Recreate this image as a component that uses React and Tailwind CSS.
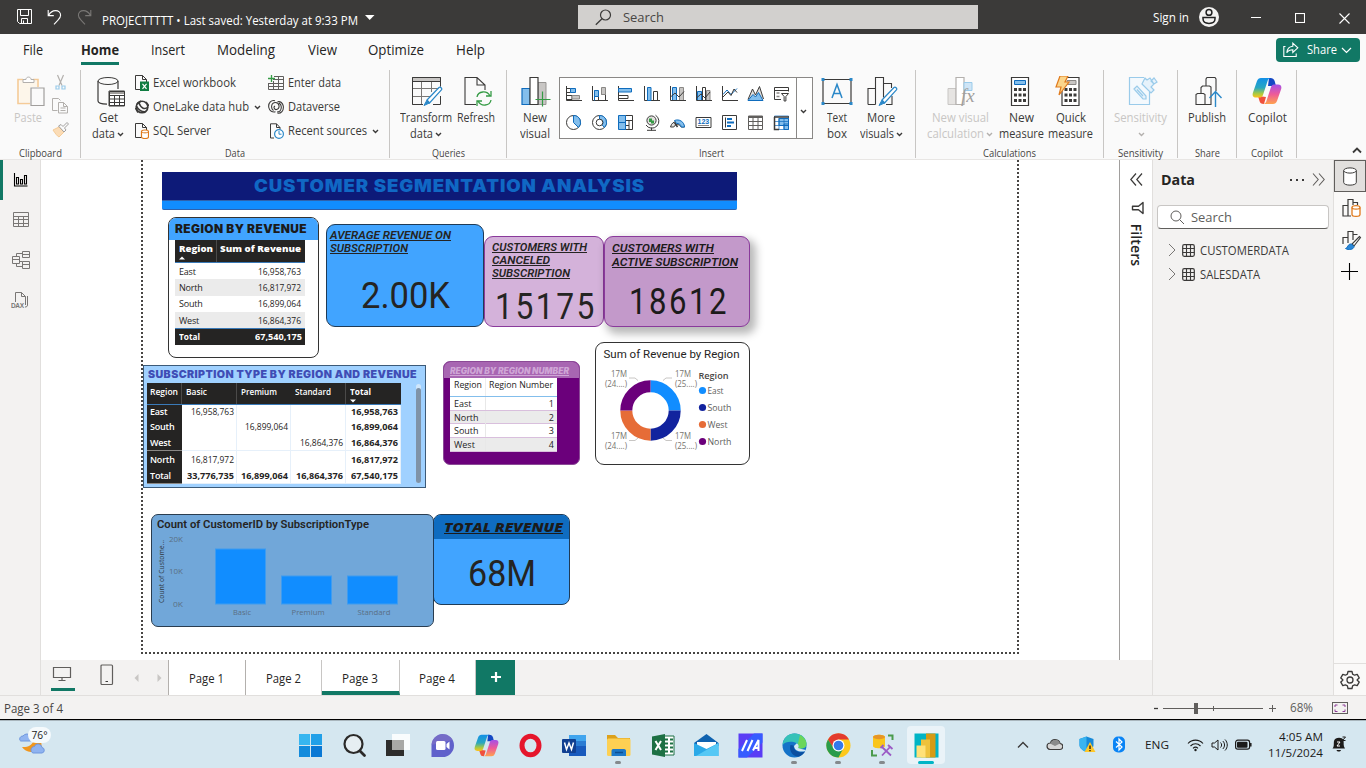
import React, { useLayoutEffect, useRef } from "react";

/* Condenses or widens a label so that it fills the width of its slot. */
function Fit({ className = "", children }) {
  const box = useRef(null);
  const text = useRef(null);
  useLayoutEffect(() => {
    const el = text.current;
    el.style.transform = "none";
    const natural = el.getBoundingClientRect().width;
    const room = box.current.offsetWidth;
    if (natural > 0) el.style.transform = `scaleX(${room / natural})`;
  });
  return (
    <span ref={box} className={"block shrink-0 whitespace-nowrap " + className}>
      <span ref={text} className="inline-block origin-left">{children}</span>
    </span>
  );
}

function Icon({ w = 16, h = 16, className = "", children }) {
  return (
    <svg width={w} height={h} viewBox={`0 0 ${w} ${h}`} fill="none" stroke="#3b3a39" className={"block shrink-0 " + className}>
      {children}
    </svg>
  );
}

const Chevron = ({ className = "", color = "#3b3a39" }) => (
  <Icon w={7} h={5} className={className}><path d="M1 1l2.5 2.5L6 1" stroke={color} strokeWidth="1.4" /></Icon>
);

/* ---------- title bar ---------- */
function TitleBar() {
  return (
    <header className="flex h-[34px] items-center bg-[#3b3a39] text-white">
      <div className="flex w-[578px] items-center pl-[17px]">
        <Icon w={15} h={16}><path d="M.5.5h14v14H2.500L.5 12.500zM3.500.5v6h8v-6M4.500 14.500v-5h6v5M6.500 11.500v3" stroke="#fff" /></Icon>
        <Icon w={15} h={16} className="ml-[15px]"><path d="M1.200 1v5.600h5.600M1.500 6.400C3.400 3 6 1.600 8.600 1.600c3 0 5 2 5 4.600 0 2.200-1 3.200-2.600 4.900L7 15.300" stroke="#fff" strokeWidth="1.100" /></Icon>
        <Icon w={15} h={16} className="ml-[15px]"><path d="M13.800 1v5.600H8.200M13.500 6.400C11.600 3 9 1.600 6.400 1.600c-3 0-5 2-5 4.600 0 2.200 1 3.200 2.600 4.900l4 4.200" stroke="#797775" strokeWidth="1.100" /></Icon>
        <Fit className="mt-[7px] ml-[10px] w-[256px] text-[12px] leading-[16px]">PROJECTTTTT • Last saved: Yesterday at 9:33 PM</Fit>
        <Icon w={10} h={6} className="mt-[2px] ml-[7px]"><path d="M0 0h9.500L4.700 5z" fill="#fff" stroke="none" /></Icon>
      </div>
      <div className="flex h-[24px] w-[400px] items-center bg-[#d2d0ce] pl-[17px] text-[#484644]">
        <Icon w={17} h={17}><circle cx="10.500" cy="6" r="5" strokeWidth="1.200" /><path d="M7 9.700L.8 15.800" strokeWidth="1.300" /></Icon>
        <Fit className="ml-[11px] w-[41px] text-[13px] leading-[18px]">Search</Fit>
      </div>
      <div className="flex flex-1 items-center pl-[175px]">
        <Fit className="mt-px w-[36px] text-[12px] leading-[16px]">Sign in</Fit>
        <Icon w={20} h={20} className="ml-[10px]"><circle cx="10" cy="10" r="10" fill="#f3f2f1" stroke="none" /><circle cx="10" cy="5.400" r="2.900" stroke="#222" strokeWidth="1.500" /><path d="M4 10.600h12v1.200c0 3-2.700 4.600-6 4.600s-6-1.600-6-4.600z" stroke="#222" strokeWidth="1.500" /></Icon>
        <Icon w={10} h={10} className="ml-[32px]"><path d="M0 5.500h10" stroke="#fff" /></Icon>
        <Icon w={10} h={10} className="mt-[2px] ml-[34px]"><rect x=".5" y=".5" width="9" height="9" stroke="#fff" strokeWidth="1.100" /></Icon>
        <Icon w={11} h={11} className="mt-[2px] ml-[34px]"><path d="M.5.5l10 10M10.500.5l-10 10" stroke="#fff" strokeWidth="1.100" /></Icon>
      </div>
    </header>
  );
}

/* ---------- ribbon ---------- */
function RibbonTabs() {
  return (
    <nav className="flex h-[34px] items-start bg-[#fafafa] pl-[23px] text-[14px] leading-[32px] text-[#252423]">
      <Fit className="w-[20px]">File</Fit>
      <div className="ml-[38px] h-[31px] w-[38px] border-b-[3px] border-[#117865]">
        <Fit className="w-[38px] font-bold">Home</Fit>
      </div>
      <Fit className="ml-[32px] w-[34px]">Insert</Fit>
      <Fit className="ml-[32px] w-[58px]">Modeling</Fit>
      <Fit className="ml-[33px] w-[29px]">View</Fit>
      <Fit className="ml-[31px] w-[56px]">Optimize</Fit>
      <Fit className="ml-[32px] w-[29px]">Help</Fit>
      <div className="mt-[4px] mr-[6px] ml-auto flex h-[24px] w-[84px] items-center rounded-[4px] bg-[#117865] pl-[7px] text-white">
        <Icon w={16} h={16}><path d="M2.500 4.500H.8v10h12.400v-3M9.800 1.200l5 4.600-5 4.600V7.800c-3 0-4.600.8-6 3 .3-4 2.400-6.200 6-6.600z" stroke="#fff" strokeWidth="1.100" /></Icon>
        <Fit className="ml-[8px] w-[30px] text-[12px] leading-[24px]">Share</Fit>
        <Icon w={11} h={7} className="ml-[4px]"><path d="M1 1l4.500 4.500L10 1" stroke="#fff" strokeWidth="1.200" /></Icon>
      </div>
    </nav>
  );
}

function Group({ className, label, labelClass, children }) {
  return (
    <section className={"mt-[2px] flex h-[88px] shrink-0 flex-col border-r border-[#c8c6c4] " + className}>
      <div className="flex h-[76px] shrink-0 items-start">{children}</div>
      <div className="flex h-[12px] shrink-0 justify-center text-[10.500px] leading-[15px] text-[#484644]"><Fit className={labelClass}>{label}</Fit></div>
    </section>
  );
}

function Big({ className = "", icon, one, oneClass, two, twoClass, arrow, dim }) {
  return (
    <div className={"flex shrink-0 flex-col items-center text-[12px] leading-[16px] " + (dim ? "text-[#c8c6c4] " : "text-[#3b3a39] ") + className}>
      <div className="mt-[6px] flex h-[34px] items-start">{icon}</div>
      <Fit className={oneClass}>{one}</Fit>
      <div className="flex h-[16px] items-center">
        {two && <Fit className={twoClass}>{two}</Fit>}
        {arrow && <Chevron className="mt-px ml-[2px]" color={dim ? "#b3b0ad" : "#3b3a39"} />}
      </div>
    </div>
  );
}

function Small({ icon, text, w, arrow }) {
  return (
    <div className="flex h-[24px] items-center text-[12px] leading-[18px] text-[#3b3a39]">
      {icon}<Fit className={"ml-[4px] " + w}>{text}</Fit>{arrow && <Chevron className="mt-px ml-[5px]" />}
    </div>
  );
}

const B = "#0f6cbd";
const L = "#83beec";
const G = "#8a8886";

const gallery = [
  <><path d="M1.500 1v14.500H17M1.500 10.500H7v4H1.500M1.500 3.500h4v4h-4" /><path d="M5.500 3.500h5v4h-5z" fill={L} stroke={B} /><path d="M7 10.500h7.500v3.500H7z" fill="#c8c6c4" stroke={G} /></>,
  <><path d="M1.500 1v14.500H17M3.500 11.500h4v4M10.500 9.500h4v6" /><path d="M3.500 5.500h4v6h-4zM3.500 5.500v10" fill={L} stroke={B} /><path d="M10.500 2.500h4v7h-4z" fill="#c8c6c4" stroke={G} /></>,
  <><path d="M1.500 1v14.500H17M1.500 10.500h9.500v3H1.500" /><path d="M1.500 3.500h13v3.500h-13z" fill={L} stroke={B} /></>,
  <><path d="M1.500 1v14.500H17M10.500 15.500v-9h4v9" /><path d="M4.500 2.500h3.500v13H4.500z" fill={L} stroke={B} /></>,
  <><path d="M3.500 2.500h4v13h-4z" fill={L} stroke={B} /><path d="M10.500 2.500h4v13h-4z" fill="#c8c6c4" stroke={G} /><path d="M1.500 1v14.500H17M1.500 12L6 8l4 4 5-5.500" /></>,
  <><path d="M2.500 6.500h4v9h-4z" fill={L} stroke={B} /><path d="M7.500 2.500h3v13h-3z" fill="#fff" /><path d="M11.500 5.500h3.500v10h-3.500z" fill="#c8c6c4" stroke={G} /><path d="M1.500 1v14.500H17M1.500 13L6 9l4 4 5-6" /></>,
  <><path d="M2 9.500l4-4.500 4 4.500 6-6" stroke={B} /><path d="M1.500 1v14.500H17M2 12l5-5 3 3.500L13 4l3 3.500" /></>,
  <><path d="M1 14.500L5.500 4l3 6L12.500 1.500 16.500 14" fill="#e1dfdd" /><path d="M1 15.500l5-6 2.500 2.500 3-4.500 4.500 8z" fill={L} stroke={B} /></>,
  <><path d="M8 14.500H1.500v-12h14v4M1.500 5.500h14" /><path d="M3.500 8h3M3.500 11.500h3" stroke={G} strokeWidth="1.400" /><path d="M8.500 8.500h7l-2.600 3V16h-1.800v-4.500z" fill="#fff" /></>,
  <><circle cx="8.500" cy="8.500" r="7" /><path d="M8.500 8.500v-7a7 7 0 0 1 5 12z" fill={L} stroke={B} /></>,
  <><circle cx="8.500" cy="8.500" r="7" fill="#fff" /><path d="M8.500 1.500a7 7 0 0 1 5 12l-2.500-2.700a3.100 3.100 0 0 0-2.500-5.400z" fill={L} stroke={B} /><circle cx="8.500" cy="8.500" r="3.300" fill="#fff" /></>,
  <><path d="M8.500 1.500h7v14h-7zM8.500 6.500h7M12 6.500v9M8.500 11.500H12" /><path d="M1.500 1.500h7v7h-7zM1.500 8.500h7v7h-7z" fill={L} stroke={B} /></>,
  <><circle cx="8.500" cy="6.500" r="4.600" fill="#e1dfdd" /><path d="M12.500 1.200A7 7 0 1 1 3 11M8.500 13.500v3M4 16.300h9" /><path d="M6 4.500h3v2h2v3H8V8H6z" fill="#359b45" stroke="none" /></>,
  <><path d="M1.500 13a7.200 7.200 0 0 1 14 0h-3.300a4 4 0 0 0-7.400 0z" fill="#e1dfdd" /><path d="M15.500 13a7.200 7.200 0 0 0-10-6.500L7.500 9.500a4 4 0 0 1 4.700 3.500z" fill={L} stroke={B} /><path d="M8.500 13L5.500 8.500" strokeWidth="1.500" /></>,
  <><path d="M1 3.500h15v10H1z" /><path d="M3 11.500h11" stroke={G} /><text x="2.500" y="10" fontSize="7" fontFamily="Liberation Sans" fontWeight="bold" fill={B} stroke="none">123</text></>,
  <><path d="M1.500 1.500h14v14h-14zM4.500 3.500v10" /><path d="M6 5h5M6 8.500h7M6 12h4" stroke={B} strokeWidth="1.800" /></>,
  <><path d="M1.500 2h14v13.500h-14zM1.500 7.500h14M1.500 11.500h14M6 4v11.500M11 4v11.500" stroke="#605e5c" /><path d="M1 3h15" strokeWidth="2" stroke="#605e5c" /></>,
  <><path d="M6 4.500h9.500v7H6zM11 10h4.500v5.500H11z" fill={L} stroke={B} /><path d="M1.500 2h14v13.500h-14zM1.500 7.500h14M1.500 11.500h14M6 4v11.500M11 4v11.500" stroke={B} strokeWidth=".7" /><path d="M6 15.500H1.500V3M1 3h15" strokeWidth="1.500" /></>,
];

const pencil = <><path d="M16 24L28 11.500c1.200-1.200 3.600 1 2.400 2.400L18.500 27z" fill="#fff" stroke="#2b88c8" strokeWidth="1.200" /><path d="M16 24l2.500 3L13 29.500z" fill="#2b88c8" stroke="#2b88c8" /></>;

function CopilotLogo({ s = 30 }) {
  return (
    <svg width={s} height={s} viewBox="0 0 30 30" className="block">
      <defs>
        <linearGradient id="cpa" x1="0" y1="0" x2="0" y2="1"><stop offset="0" stopColor="#1290e8" /><stop offset=".5" stopColor="#28a7c0" /><stop offset=".8" stopColor="#a9c941" /><stop offset="1" stopColor="#ffc21a" /></linearGradient>
        <linearGradient id="cpb" x1="0" y1="0" x2="0" y2="1"><stop offset="0" stopColor="#a550e8" /><stop offset=".5" stopColor="#ee5a98" /><stop offset="1" stopColor="#ffa34e" /></linearGradient>
      </defs>
      <path d="M17 2c4 0 5 1 5.800 3.500L24 10h-8z" fill="#1448c4" />
      <path d="M6 20l8 1L12 28c-3 0-4-1-4.500-3z" fill="#f0503c" />
      <path d="M9 2h10c-2 0-3 1.500-3.600 3.500L11 19c-.8 2-1.800 2.500-4 2.500H4C1 21.500 0 19.500 1 16.500L5 5c.8-2 2-3 4-3z" fill="url(#cpa)" />
      <path d="M21 28H11c2 0 3-1.500 3.600-3.500L19 11c.8-2 1.800-2.500 4-2.500h3c3 0 4 2 3 5L25 25c-.8 2-2 3-4 3z" fill="url(#cpb)" />
    </svg>
  );
}

const page = <path d="M12 14.500H.5V.5h7l4 4V8M7.500.5v4h4" />;

function Ribbon() {
  return (
    <div className="flex h-[92px] border-b border-[#e8e6e4] bg-[#fafafa]">
      <Group className="w-[81px]" label="Clipboard" labelClass="w-[43px]">
        <Big dim className="w-[56px]" one="Paste" oneClass="w-[28px]" icon={
          <Icon w={28} h={32} className="ml-[5px]"><path d="M13 27.500H1v-24h5M16 3.500h5V11" stroke="#f5cb97" strokeWidth="1.600" /><path d="M2.500 5H20v6h-7v15H2.500z" fill="#fdf6ea" stroke="none" /><path d="M6 6.500V3.500h3C9 .3 14 .3 14 3.500h3v3z" fill="#fff" stroke="#b3b0ad" /><path d="M14 12h13v17.500H14z" fill="#fafafa" stroke="#a19f9d" strokeWidth="1.200" /></Icon>} />
        <div className="mt-[4px] -ml-[4px] flex flex-col gap-[7px]">
          <Icon w={17} h={17}><path d="M5.500 1L10 11.500M11.500 1L7 11.500" stroke="#b3b0ad" strokeWidth="1.200" /><path d="M4 12h3v3H4zM10 12h3v3h-3z" stroke="#9acbea" strokeWidth="1.200" /></Icon>
          <Icon w={17} h={17}><path d="M5.500 12.500H.5V.5h6l2 2M6.500 4.500h5l4 4v6.500h-9zM11.500 4.500v4h4M8.500 10h5M8.500 12.500h5" stroke="#b3b0ad" /></Icon>
          <Icon w={17} h={17}><path d="M1 8l6-3 5 5-5 5c-2-1-4-4-6-7z" fill="#fbdcb6" stroke="#f5cb97" /><path d="M6.500 4L9 2.500l2 2L15 .5 16.500 2l-4 4L14 8l-2 2z" fill="#fafafa" stroke="#a19f9d" /></Icon>
        </div>
      </Group>

      <Group className="w-[309px]" label="Data" labelClass="w-[20px]">
        <Big className="w-[54px]" one="Get" oneClass="w-[19px]" two="data" twoClass="w-[23px]" arrow icon={
          <Icon w={28} h={32} className="ml-[5px]"><ellipse cx="11" cy="5" rx="10" ry="3.500" /><path d="M1 5v20c0 1.500 3 3 9 3.200M21 5v8" strokeWidth="1.200" /><path d="M12 15h15.500v15H12z" fill="#fff" /><path d="M12 16.500h15.500" strokeWidth="3" stroke="#a19f9d" /><path d="M12.500 15.500h15v14h-15zM12 19.500h15.500M12 23h15.500M12 26.500h15.500M17.500 19v11M22.500 19v11" /></Icon>} />
        <div className="mt-px flex w-[133px] flex-col">
          <Small text="Excel workbook" w="w-[83px]" icon={<Icon w={14} h={16}>{page}<rect x="5" y="6.500" width="9" height="9.500" fill="#107c41" stroke="none" /><path d="M7.500 8.800l4 5M11.500 8.800l-4 5" stroke="#fff" strokeWidth="1.200" /></Icon>} />
          <Small arrow text="OneLake data hub" w="w-[96px]" icon={<Icon w={14} h={16}><circle cx="7" cy="8" r="5.800" strokeWidth="1.600" /><path d="M1.500 7c1.500 4 6 6.500 9.500 5.500M4 4c2 5.500 6 7 9 4M2 5L6 2M11 3l3 4M.5 9l2.500 4.500" strokeWidth="1.600" /></Icon>} />
          <Small text="SQL Server" w="w-[58px]" icon={<Icon w={14} h={16}>{page}<path d="M6.500 8.500c0-2 7-2 7 0v5.500c0 2-7 2-7 0z" fill="#fff" stroke="#e07a1c" strokeWidth="1.200" /><path d="M6.500 8.500c0 1.800 7 1.800 7 0" stroke="#e07a1c" /></Icon>} />
        </div>
        <div className="mt-px flex flex-col">
          <Small text="Enter data" w="w-[53px]" icon={<Icon w={16} h={16}><path d="M6 1.500h9.500v13H.5V8M5 4.500h10.500M.5 8.500h15M.5 11.500h15M5.500 6v8.500M10.500 2v12.500" stroke="#605e5c" /><path d="M3.500 0v7M0 3.500h7" stroke="#359b45" strokeWidth="1.300" /></Icon>} />
          <Small arrow={false} text="Dataverse" w="w-[52px]" icon={<Icon w={16} h={16}><path d="M5.500 11.500c-3-2-2.500-8 2-8 4 0 5 6 1 7-2 .5-3.500-2.500-1.500-3.500M11 4c3.500 2 3 9-2 9M7 1.800C3.500.5 0 4 .8 8.500c.6 3.500 3.700 5 6.700 4.300M9.500 14.200c3.500.5 6.400-2.500 5.800-7C14.800 4 12.500 2 9.500 2.800" strokeWidth="1.100" /></Icon>} />
          <Small arrow text="Recent sources" w="w-[79px]" icon={<Icon w={16} h={16}><path d="M6 15H2.500V.8h6L12 4.500V6M8.500.8v3.700H12" /><circle cx="11" cy="11" r="4.400" fill="#fff" stroke="#2b88c8" strokeWidth="1.200" /><path d="M11 8v3.200h2.500" stroke="#2b88c8" /></Icon>} />
        </div>
      </Group>

      <Group className="w-[117px]" label="Queries" labelClass="w-[33px]">
        <Big className="ml-[10px] w-[52px]" one="Transform" oneClass="w-[52px]" two="data" twoClass="w-[23px]" arrow icon={
          <Icon w={32} h={32} className="ml-[2px]"><path d="M1.500 1.500h28v4h-28z" fill="#c8c6c4" /><path d="M12 28.500H1.500v-27h28v9M1.500 12.500h28M1.500 20.500h18M10.500 6v22.500M20.500 6v10" stroke="#797775" /><path d="M12 28.500H1.500v-27h28v9M29.500 20v8.500H22" />{pencil}</Icon>} />
        <Big className="ml-[5px] w-[38px]" one="Refresh" oneClass="w-[38px]" icon={
          <Icon w={28} h={32} className="ml-[3px]"><path d="M12 28.500H1V1.500h12L21 9v5M13 1.500V9h8" strokeWidth="1.100" /><path d="M13 21c1-6 10-7 13-1M27 15v5h-5M27 24c-1 6-10 7-13 1M13 30v-5h5" stroke="#359b45" strokeWidth="1.300" /></Icon>} />
      </Group>

      <Group className="w-[409px]" label="Insert" labelClass="w-[25px]">
        <Big className="ml-[10px] w-[36px]" one="New" oneClass="w-[24px]" two="visual" twoClass="w-[30px]" icon={
          <Icon w={30} h={32} className="ml-px"><path d="M17 6.500h8v22h-8z" fill="#c8c6c4" stroke="#979593" /><path d="M1 12.500h8v16H1z" fill={L} stroke={B} strokeWidth="1.200" /><path d="M9 1.500h8v27H9z" fill="#fff" strokeWidth="1.200" /><path d="M21.500 15.500v15M14.500 23.500h15" stroke="#359b45" strokeWidth="1.200" /></Icon>} />
        <div className="mt-[7px] ml-[6px] flex h-[62px] w-[254px] border border-[#8a8886] bg-white">
          <div className="grid w-[236px] grid-cols-9 grid-rows-2 items-center justify-items-center py-px pr-[2px]">
            {gallery.map((g, i) => <Icon key={i} w={17} h={17}>{g}</Icon>)}
          </div>
          <div className="flex flex-1 items-center justify-center border-l border-[#8a8886]"><Chevron className="mt-[6px] -ml-[2px]" /></div>
        </div>
        <Big className="ml-[7px] w-[34px]" one="Text" oneClass="w-[20px]" two="box" twoClass="w-[20px]" icon={
          <Icon w={32} h={32} className="-ml-px"><path d="M2 3.500h28v24H2z" strokeWidth="1.200" /><path d="M.5 2h3v3h-3zM28.500 2h3v3h-3zM.5 26h3v3h-3zM28.500 26h3v3h-3z" fill="#2b88c8" stroke="none" /><path d="M11 22L16 8.500 21 22M12.600 17.500h6.800" stroke="#2b88c8" strokeWidth="1.500" /></Icon>} />
        <Big className="ml-[5px] w-[44px]" one="More" oneClass="w-[28px]" two="visuals" twoClass="w-[34px]" arrow icon={
          <Icon w={32} h={32} className="ml-[2px]"><path d="M2 28.500v-16h7.500M9.500 28.500v-27h8v20M17.500 7.500h8V12M2 28.500h7.500M26 20v8.500h-6" strokeWidth="1.100" />{pencil}</Icon>} />
      </Group>

      <Group className="w-[188px]" label="Calculations" labelClass="w-[53px]">
        <Big dim className="ml-[11px] w-[66px]" one="New visual" oneClass="w-[57px]" two="calculation" twoClass="w-[57px]" arrow icon={
          <Icon w={30} h={32} className="ml-[4px]"><path d="M1 12.500h8v16H1z" fill="#e6e4e2" stroke="#c8c6c4" /><path d="M9 1.500h8v27H9z" fill="#fff" stroke="#b3b0ad" strokeWidth="1.200" /><path d="M17 6.500h8v8h-8z" fill="#cfe5f6" stroke="#9acbea" /><text x="14" y="26" fontSize="19" fontStyle="italic" fontFamily="Liberation Serif" fill="#a19f9d" stroke="none">fx</text></Icon>} />
        <Big className="ml-[5px] w-[46px]" one="New" oneClass="w-[25px]" two="measure" twoClass="w-[45px]" icon={
          <Icon w={20} h={32} className="-ml-[2px]"><path d="M1.500 1.500h17v28h-17z" fill="#fff" strokeWidth="1.200" /><path d="M4.500 4.500h11v4h-11z" fill={L} stroke={B} /><path d="M4 13.500h12M4 19h12M4 24.500h12" strokeWidth="3" strokeDasharray="3 1.500" /></Icon>} />
        <Big className="ml-[4px] w-[45px]" one="Quick" oneClass="w-[30px]" two="measure" twoClass="w-[45px]" icon={
          <Icon w={26} h={32} className="-ml-[6px]"><path d="M7 1.500h17v28H7z" fill="#fff" strokeWidth="1.200" /><path d="M12 4.500h9v4h-9z" fill="#c8c6c4" stroke={G} /><path d="M9.500 13.500h12M9.500 19h12M9.500 24.500h12" strokeWidth="3" strokeDasharray="3 1.500" /><path d="M5 0h8l-3 6h4L4 19l2-8H1z" fill="#fbd58b" stroke="#e07a1c" strokeWidth="1.200" /></Icon>} />
      </Group>

      <Group className="w-[74px]" label="Sensitivity" labelClass="w-[45px]">
        <Big dim className="ml-[9px] w-[55px]" one="Sensitivity" oneClass="w-[53px]" arrow icon={
          <Icon w={30} h={32} className="ml-[4px]"><path d="M16 1.500H1.500v27h20V16" stroke="#9acbea" strokeWidth="1.200" fill="#f4f9fd" /><path d="M6 13l3-3 9 10v3h-3zM9 13.500l6 6.500M14 8l9 9 3-3-3-3 3-3-3-3 3-3 3 4-3 2-4-6-3 2-2-2z" fill="#e6f2fb" stroke="#9acbea" strokeWidth="1.200" /></Icon>} />
      </Group>

      <Group className="w-[59px]" label="Share" labelClass="w-[25px]">
        <Big className="w-[58px]" one="Publish" oneClass="w-[38px]" icon={
          <Icon w={28} h={32} className="ml-[3px]"><path d="M1 28.500v-10l1.500-1h6l1.500 1v10zM6 17v-5.500L7.500 10h7l1.500 1v17.500h-6M11 10V3l1-1.500h8L21 3v12" strokeWidth="1.100" /><path d="M20.500 31V16M14.500 22l6-6.500 6 6.500" stroke="#2b88c8" strokeWidth="1.400" /></Icon>} />
      </Group>

      <Group className="w-[60px]" label="Copilot" labelClass="w-[32px]">
        <Big className="w-[60px]" one="Copilot" oneClass="w-[39px]" icon={<CopilotLogo />} />
      </Group>
      <Icon w={10} h={7} className="mt-[79px] ml-[55px]"><path d="M1 5.500l4-4 4 4" strokeWidth="1.800" /></Icon>
    </div>
  );
}

/* ---------- report visuals ---------- */
const regions = [["East", "16,958,763"], ["North", "16,817,972"], ["South", "16,899,064"], ["West", "16,864,376"]];

function RegionRevenue() {
  return (
    <div className="absolute top-[57px] left-[127px] h-[141px] w-[151px] overflow-hidden rounded-[8px] border border-[#333] bg-white">
      <div className="h-[22px] bg-[#41a4ff] pl-[6px] font-['Inter'] text-[11.500px] leading-[22px] font-black tracking-[0.4px] text-[#1c1b1a]"><Fit className="w-[132px]">REGION BY REVENUE</Fit></div>
      <div className="ml-[6px] w-[130px] text-[9px]">
        <div className="flex h-[23px] border-b border-[#3a7ab8] bg-[#252423] font-extrabold text-white">
          <div className="w-[42px] border-r border-[#4b4a49] pt-[3px] pl-[4px] leading-[11px]"><Fit className="w-[34px]">Region</Fit><Icon w={6} h={4} className="mt-[2px]"><path d="M0 3.500h6L3 .5z" fill="#fff" stroke="none" /></Icon></div>
          <div className="pt-[3px] pl-[3px] leading-[11px]"><Fit className="w-[81px]">Sum of Revenue</Fit></div>
        </div>
        {regions.map(([a, b], i) => (
          <div key={a} className={"flex h-[16.300px] items-center justify-between pr-[4px] pl-[4px] leading-[13px] text-[#252423] " + (i % 2 ? "bg-[#ebebeb]" : "bg-white")}>
            <span className="tracking-[-0.2px]">{a}</span><Fit className="w-[43px]">{b}</Fit>
          </div>
        ))}
        <div className="flex h-[17px] items-center justify-between border-t border-[#3a7ab8] bg-[#252423] pr-[3px] pl-[4px] leading-[14px] font-bold text-white"><Fit className="w-[21px]">Total</Fit><Fit className="w-[47px]">67,540,175</Fit></div>
      </div>
    </div>
  );
}

const matrix = [
  ["East", "16,958,763", "", "", "16,958,763"],
  ["South", "", "16,899,064", "", "16,899,064"],
  ["West", "", "", "16,864,376", "16,864,376"],
  ["North", "16,817,972", "", "", "16,817,972"],
  ["Total", "33,776,735", "16,899,064", "16,864,376", "67,540,175"],
];

function SubscriptionMatrix() {
  return (
    <div className="absolute top-[205px] left-[102px] h-[123px] w-[283px] border border-[#3c5a78] bg-[#a0d1ff] pl-[3px]">
      <Fit className="ml-px w-[269px] font-['Inter'] text-[10.300px] leading-[17px] font-black tracking-[0.4px] text-[#3f4db5]">SUBSCRIPTION TYPE BY REGION AND REVENUE</Fit>
      <div className="flex">
        <div className="w-[254px] text-[9px] leading-[14px]">
          <div className="grid h-[22px] grid-cols-[35px_55px_54px_55px_55px] border-b border-[#3a7ab8] bg-[#252423] font-semibold text-white">
            <div className="border-r border-[#4b4a49] pt-[2px] pl-[3px]"><Fit className="w-[28px]">Region</Fit></div>
            <div className="border-r border-[#4b4a49] pt-[2px] pl-[4px]"><Fit className="w-[21px]">Basic</Fit></div>
            <div className="pt-[2px] pl-[4px]"><Fit className="w-[36px]">Premium</Fit></div>
            <div className="border-r border-[#4b4a49] pt-[2px] pl-[4px]"><Fit className="w-[36px]">Standard</Fit></div>
            <div className="pt-[2px] pl-[4px] font-bold"><Fit className="w-[21px]">Total</Fit><Icon w={6} h={4}><path d="M0 .5h6l-3 3z" fill="#fff" stroke="none" /></Icon></div>
          </div>
          {matrix.map((r, i) => (
            <div key={r[0]} className={"grid grid-cols-[35px_55px_54px_55px_55px] " + (i === 0 ? "h-[13px]" : "h-[16.400px]")}>
              {r.map((c, j) => (
                <div key={j} className={"flex items-center border-b " + (j === 0 ? "border-[#8a8886] bg-[#252423] pl-[3px] font-semibold text-white " : "justify-end border-r border-[#e6f0fa] bg-white pr-[2px] text-[#252423] ") + (i === 4 || j === 4 ? "font-bold " : "") + (i > 0 ? "pt-[2px]" : "")}>
                  {c && (j === 0 ? <span className="tracking-[-0.2px]">{c}</span> : <Fit className={i === 4 || j === 4 ? "w-[47px]" : "w-[43px]"}>{c}</Fit>)}
                </div>
              ))}
            </div>
          ))}
        </div>
        <div className="mt-px ml-[15px] h-[99px] w-[5px] rounded-full bg-[#cfe6fb] pt-[4px]"><div className="h-[95px] rounded-full bg-[#7f93a8]" /></div>
      </div>
    </div>
  );
}

function RegionNumber() {
  return (
    <div className="absolute top-[201px] left-[402px] h-[104px] w-[137px] overflow-hidden rounded-[7px] border border-[#8b4a96] bg-[#6b007b]">
      <div className="h-[16px] bg-[#a866b2] pl-[6px] font-['Inter'] text-[8.500px] leading-[18px] font-black text-[#cfa5d6] italic"><Fit className="w-[119px] [&>span]:underline">REGION BY REGION NUMBER</Fit></div>
      <div className="ml-[6px] w-[107px] bg-white text-[9px] text-[#252423]">
        <div className="flex h-[19px] border-b border-[#83beec] leading-[14px]">
          <div className="w-[36px] border-r border-[#eee] pl-[4px]"><Fit className="w-[28px]">Region</Fit></div>
          <div className="pl-[3px]"><Fit className="w-[64px]">Region Number</Fit></div>
        </div>
        {regions.map(([a], i) => (
          <div key={a} className={"flex h-[13.700px] items-center border-b border-[#d9bfdd] leading-[13px] " + (i % 2 ? "bg-[#ebebeb]" : "bg-white")}>
            <div className="w-[36px] border-r border-[#e8e8e8] pl-[4px]">{a}</div><div className="flex-1 pr-[3px] text-right">{i + 1}</div>
          </div>
        ))}
      </div>
    </div>
  );
}

function Donut() {
  const arcs = [["#118dff", 0], ["#12239e", 1], ["#e66c37", 2], ["#6b007b", 3]];
  const legend = [["#118dff", "East", 16], ["#12239e", "South", 24], ["#e66c37", "West", 20], ["#6b007b", "North", 24]];
  const calls = [["17M", "(24....)", 33, 36], ["17M", "(25....)", 97, 36], ["17M", "(24....)", 33, 98], ["17M", "(25....)", 97, 98]];
  return (
    <div className="absolute top-[182px] left-[554px] h-[123px] w-[155px] rounded-[9px] border border-[#333] bg-white">
      <svg width="153" height="121" viewBox="1 1 153 121" className="block font-['Open_Sans']">
        <text x="8.500" y="16" fontSize="11" fill="#252423" textLength="136" lengthAdjust="spacingAndGlyphs" className="font-['Roboto']">Sum of Revenue by Region</text>
        {arcs.map(([c, i]) => <path key={c} d="M55.500 44.300a24.200 24.200 0 0 1 24.200 24.200" fill="none" stroke={c} strokeWidth="12" transform={`rotate(${i * 90} 55.500 68.500)`} />)}
        <path d="M34 36h6l3 2.500M77 36h-6l-3 2.500M34 98.500h6l3-2.500M77 98.500h-6l-3-2.500" fill="none" stroke="#c8c6c4" />
        {calls.map(([a, b, x, y], i) => (
          <g key={i} fontSize="8.500" fill="#77756f">
            <text x={i % 2 ? 80 : 16} y={y - 1} textLength="16" lengthAdjust="spacingAndGlyphs">{a}</text>
            <text x={i % 2 ? 80 : 10} y={y + 9} textLength="22" lengthAdjust="spacingAndGlyphs">{b}</text>
          </g>
        ))}
        <text x="103.500" y="37" fontSize="9.500" fontWeight="600" fill="#484644" textLength="30" lengthAdjust="spacingAndGlyphs">Region</text>
        {legend.map(([c, n, w], i) => (
          <g key={n}><circle cx="107.500" cy={48.500 + i * 17} r="3.600" fill={c} /><text x="112.500" y={52 + i * 17} fontSize="9.500" fill="#605e5c" textLength={w} lengthAdjust="spacingAndGlyphs">{n}</text></g>
        ))}
      </svg>
    </div>
  );
}

function SubscriptionBars() {
  const bars = [[65, 35, 55, "Basic", 18], [131, 62, 28, "Premium", 33], [197, 62, 28, "Standard", 33]];
  return (
    <div className="absolute top-[354px] left-[110px] h-[113px] w-[283px] rounded-[7px] border border-[#2a3d50] bg-[#71a7d9]">
      <svg width="281" height="111" viewBox="1 1 281 111" className="block font-['Open_Sans']">
        <text x="6" y="14" fontSize="11" fontWeight="600" fill="#252423" textLength="212" lengthAdjust="spacingAndGlyphs" className="font-['Roboto']">Count of CustomerID by SubscriptionType</text>
        <g fontSize="8" fill="#5a6f84">
          <text x="18" y="28" textLength="14" lengthAdjust="spacingAndGlyphs">20K</text><text x="18" y="60" textLength="14" lengthAdjust="spacingAndGlyphs">10K</text><text x="22" y="93" textLength="10" lengthAdjust="spacingAndGlyphs">0K</text>
          {bars.map(([x, y, h, n, w]) => (
            <g key={n}><rect x={x - 0.5} y={y} width="50" height={h} fill="#118dff" stroke="#3f9cf0" /><text x={x + 26 - w / 2} y="101" textLength={w} lengthAdjust="spacingAndGlyphs">{n}</text></g>
          ))}
        </g>
        <text transform="translate(12.500 89) rotate(-90)" fontSize="7.500" fill="#303840" textLength="63" lengthAdjust="spacingAndGlyphs">Count of Custome...</text>
      </svg>
    </div>
  );
}

function Canvas() {
  return (
    <div className="relative h-[500px] w-[1078px] shrink-0 overflow-hidden bg-white">
      <div className="ml-[100px] h-[494px] w-[878px] border-x-2 border-b-2 border-dotted border-[#484644]" />
      <div className="absolute top-[12px] left-[121px] w-[575px]">
        <div className="flex h-[28px] justify-center bg-[#0d1a78] font-['Inter'] text-[17px] leading-[28px] font-black tracking-[0.8px] text-[#1068c4]"><Fit className="w-[391px]">CUSTOMER SEGMENTATION ANALYSIS</Fit></div>
        <div className="h-[10px] rounded-b-[2px] border-y border-[#2f62ad] bg-[#118dff]" />
      </div>
      <RegionRevenue />
      <div className="absolute top-[64px] left-[285px] h-[103px] w-[158px] rounded-[9px] border border-[#1f3b57] bg-[#41a4ff] pt-[4px] pl-[3px] font-['Roboto'] text-[11.500px] leading-[13px] font-semibold text-[#252423]">
        <Fit className="w-[121px] italic [&>span]:underline">AVERAGE REVENUE ON</Fit>
        <Fit className="w-[78px] italic [&>span]:underline">SUBSCRIPTION</Fit>
        <Fit className="mt-[17px] ml-[31px] w-[89px] text-[37px] leading-[48px] font-normal">2.00K</Fit>
      </div>
      <div className="absolute top-[76px] left-[443px] h-[91px] w-[120px] rounded-[9px] border border-[#8a3a9b] bg-[#d4b2da] pt-[4px] pl-[7px] font-['Roboto'] text-[11px] leading-[13px] font-semibold text-[#252423]">
        <Fit className="w-[95px] italic [&>span]:underline">CUSTOMERS WITH</Fit>
        <Fit className="w-[58px] italic [&>span]:underline">CANCELED</Fit>
        <Fit className="w-[78px] italic [&>span]:underline">SUBSCRIPTION</Fit>
        <Fit className="mt-[3px] ml-[3px] w-[102px] text-[37px] leading-[48px] font-normal tracking-[3px]">15175</Fit>
      </div>
      <div className="absolute top-[76px] left-[563px] h-[91px] w-[146px] rounded-[9px] border border-[#8a3a9b] bg-[#c399ca] pt-[4px] pl-[7px] font-['Roboto'] text-[11.500px] leading-[14px] font-semibold text-[#1c1b1a] shadow-[4px_5px_8px_2px_rgba(0,0,0,0.28)]">
        <Fit className="w-[102px] italic [&>span]:underline">CUSTOMERS WITH</Fit>
        <Fit className="w-[126px] italic [&>span]:underline">ACTIVE SUBSCRIPTION</Fit>
        <Fit className="mt-[9px] ml-[17px] w-[100px] text-[37px] leading-[48px] font-normal tracking-[3px]">18612</Fit>
      </div>
      <SubscriptionMatrix />
      <RegionNumber />
      <Donut />
      <SubscriptionBars />
      <div className="absolute top-[354px] left-[392px] h-[91px] w-[137px] overflow-hidden rounded-[8px] border border-[#1f3b57] bg-[#41a4ff] text-[#1c1b1a]">
        <div className="h-[24px] bg-[#0f6cc0] pl-[10px] font-['Open_Sans'] text-[13px] leading-[24px] font-extrabold italic"><Fit className="w-[119px] [&>span]:underline">TOTAL REVENUE</Fit></div>
        <Fit className="mt-[11px] ml-[34px] w-[68px] font-['Roboto'] text-[37px] leading-[48px] text-[#252423]">68M</Fit>
      </div>
    </div>
  );
}

/* ---------- side panes ---------- */
function LeftNav() {
  return (
    <aside className="flex h-[535px] w-[41px] shrink-0 flex-col border-r border-[#e1dfdd] bg-[#f3f2f1]">
      <div className="flex h-[40px] items-center border-l-[3px] border-[#117865] pl-[10px]"><Icon w={16} h={16}><path d="M1.500 1v13h13M3.500 5.500h2v6.500h-2zM7.500 7.500h2v4.500h-2zM11.500 3.500h2v8.500h-2z" stroke="#000" strokeWidth="1.100" /></Icon></div>
      <div className="flex h-[40px] items-center pl-[13px]"><Icon w={16} h={16}><path d="M.5.5h15v14H.5zM.5 4.500h15M.5 7.500h15M.5 11.500h15M5.500 4.500v10M10.500 4.500v10" stroke="#797775" /></Icon></div>
      <div className="flex h-[40px] items-center pl-[12px]"><Icon w={18} h={18}><path d="M.5 5.500h7v7h-7zM.5 8.500h7M10.500.5h7v6h-7zM10.500 3.500h7M10.500 10.500h7v7h-7zM10.500 13.500h7M4.500 5.500v-3h6M7.500 10.500h3M4.500 12.500v3h6" stroke="#797775" /></Icon></div>
      <div className="flex h-[40px] items-center pl-[11px]"><Icon w={18} h={18}><path d="M4.500 11V1.500h6l4 4V14M10.500 1.500v4h4M16.500 5v9c0 1.500-1 2-2.500 2" stroke="#797775" /><text x="0" y="16.500" fontSize="6.500" fontWeight="bold" fontFamily="Liberation Sans" fill="#797775" stroke="none" textLength="13">DAX</text></Icon></div>
    </aside>
  );
}

function PageTabs() {
  return (
    <div className="flex h-[35px] items-start bg-[#f3f2f1] text-[12px] leading-[37px] text-[#252423]">
      <div className="mt-[7px] ml-[10px] flex h-[24px] w-[24px] flex-col items-center border-b-[3px] border-[#117865]"><Icon w={20} h={15} className="-ml-[2px]"><path d="M1.500.5h17v10h-17zM10 10.500v3M6.500 13.500h7" stroke="#605e5c" strokeWidth="1.200" /></Icon></div>
      <Icon w={14} h={22} className="mt-[4px] ml-[25px]"><rect x="1" y="1" width="11.500" height="19.500" rx="1" stroke="#605e5c" strokeWidth="1.200" /><path d="M5.500 17.500h2.500" /></Icon>
      <Icon w={5} h={8} className="mt-[14px] ml-[20px]"><path d="M4.500 0v8L.5 4z" fill="#c8c6c4" stroke="none" /></Icon>
      <Icon w={5} h={8} className="mt-[14px] ml-[18px]"><path d="M.5 0v8l4-4z" fill="#c8c6c4" stroke="none" /></Icon>
      <div className="ml-[6px] flex h-[35px] w-[78px] justify-center border-x border-[#b3b0ad] bg-white"><Fit className="-ml-[2px] w-[35px]">Page 1</Fit></div>
      <div className="flex h-[35px] w-[76px] justify-center border-r border-[#c8c6c4] bg-white"><Fit className="w-[35px]">Page 2</Fit></div>
      <div className="flex h-[35px] w-[78px] justify-center border-r border-b-4 border-r-[#c8c6c4] border-b-[#117865] bg-white"><Fit className="-ml-px w-[36px]">Page 3</Fit></div>
      <div className="flex h-[35px] w-[76px] justify-center border-r border-[#c8c6c4] bg-white"><Fit className="-ml-px w-[36px]">Page 4</Fit></div>
      <div className="flex h-[35px] w-[39px] items-center justify-center bg-[#117865]"><Icon w={12} h={12} className="-mt-[2px]"><path d="M6 1v10M1 6h10" stroke="#fff" strokeWidth="2.200" /></Icon></div>
    </div>
  );
}

function FiltersPane() {
  return (
    <div className="flex h-[500px] w-[33px] flex-col items-center border-l border-[#a19f9d] bg-white pt-[13px]">
      <Icon w={13} h={13}><path d="M6 .5L.8 6.500l5.200 6M12 .5L6.800 6.500l5.200 6" strokeWidth="1.200" /></Icon>
      <Icon w={14} h={14} className="mt-[15px] ml-[3px]"><path d="M12 1.500v11L7.500 8.700H1.500V5.300h6z" strokeWidth="1.400" strokeLinejoin="round" /></Icon>
      <div className="mt-[7px] ml-px flex h-[46px] w-[18px] items-center justify-center"><span className="rotate-90 text-[14px] leading-[18px] font-semibold tracking-[0.1px] text-[#252423]">Filters</span></div>
    </div>
  );
}

function DataPane() {
  const fields = [["CUSTOMERDATA", "w-[89px]"], ["SALESDATA", "w-[60px]"]];
  return (
    <aside className="h-[535px] w-[181px] shrink-0 border-l border-[#e1dfdd] bg-[#f3f2f1] text-[#3b3a39]">
      <div className="flex h-[39px] items-center pl-[8px]">
        <Fit className="-mt-[2px] w-[34px] text-[15px] leading-[20px] font-bold text-[#252423]">Data</Fit>
        <Icon w={16} h={4} className="ml-[94px]"><path d="M1 2h2M7 2h2M13 2h2" strokeWidth="1.800" /></Icon>
        <Icon w={13} h={13} className="ml-[7px]"><path d="M1 .5l5.200 6-5.200 6M7 .5l5.200 6-5.200 6" stroke="#605e5c" strokeWidth="1.100" /></Icon>
      </div>
      <div className="mt-[6px] ml-[4px] flex h-[24px] w-[172px] items-center rounded-[4px] border border-b-[#605e5c] border-[#c8c6c4] bg-white pl-[12px]">
        <Icon w={15} h={15}><circle cx="6" cy="6" r="5" stroke="#605e5c" /><path d="M9.500 9.500l4.500 4.500" stroke="#605e5c" /></Icon>
        <Fit className="ml-[6px] w-[41px] text-[13px] leading-[18px] text-[#605e5c]">Search</Fit>
      </div>
      <div className="mt-[9px]">
        {fields.map(([n, w]) => (
          <div key={n} className="flex h-[24px] items-center pl-[15px] text-[12px] leading-[18px]">
            <Icon w={8} h={14}><path d="M1 1l6 6-6 6" stroke="#797775" /></Icon>
            <Icon w={13} h={13} className="ml-[6px]"><rect x=".7" y=".7" width="11.600" height="11.600" rx="1.500" strokeWidth="1.200" /><path d="M.7 4.500h11.600M.7 8.500h11.600M4.500.7v11.600M8.500.7v11.600" strokeWidth="1.100" /></Icon>
            <Fit className={"ml-[5px] mt-[2px] " + w}>{n}</Fit>
          </div>
        ))}
      </div>
    </aside>
  );
}

function RightRail() {
  return (
    <aside className="flex h-[535px] w-[33px] shrink-0 flex-col border-l border-[#e1dfdd] bg-[#faf9f8]">
      <div className="flex h-[32px] items-center justify-center border border-[#605e5c] bg-[#e1dfdd]"><Icon w={14} h={19}><path d="M.7 3.500v12c0 3.500 12.600 3.500 12.600 0v-12" fill="#fff" /><ellipse cx="7" cy="3.500" rx="6.300" ry="2.600" fill="#fff" /></Icon></div>
      <div className="flex h-[32px] items-center justify-center"><Icon w={20} h={20} className="ml-[3px]"><path d="M9 18H1V7.500h5M6 18V1.500h5V7M11 4.500h4.500V7" strokeWidth="1.200" /><path d="M10 9.500c0-2.500 8-2.500 8 0v7c0 2.500-8 2.500-8 0z" fill="#fff" stroke="#e07a1c" strokeWidth="1.300" /><path d="M10 9.500c0 2.200 8 2.200 8 0" stroke="#e07a1c" strokeWidth="1.200" /></Icon></div>
      <div className="flex h-[32px] items-center justify-center"><Icon w={20} h={20} className="ml-[3px]"><path d="M1 14V7.500h5M6 13V1.500h5V10M11 4.500h4.500" strokeWidth="1.200" /><path d="M17.500 6.500L10 14l2 2 6.500-8.500z" fill="#fff" strokeWidth="1.100" /><path d="M3.500 18.500c2 .2 2-5 6-4.500l2.500 2.500c0 3-5.500 4-8.500 2z" fill="#2b88d8" stroke={B} /></Icon></div>
      <div className="flex h-[32px] items-center justify-center"><Icon w={17} h={17} className="-mt-[2px] -ml-px"><path d="M8.500 0v17M0 8.500h17" stroke="#000" strokeWidth="1.100" /></Icon></div>
      <div className="mt-auto flex h-[32px] items-center justify-center border-t border-[#e1dfdd]"><Icon w={20} h={20}><path d="M8 1.500h4l.6 2.600 2 1.100 2.600-.8 2 3.500-2 1.800v.6l2 1.800-2 3.500-2.600-.8-2 1.100-.6 2.600H8l-.6-2.600-2-1.100-2.600.8-2-3.500 2-1.800v-.6l-2-1.800 2-3.500 2.600.8 2-1.100z" strokeWidth="1.300" strokeLinejoin="round" /><circle cx="10" cy="10" r="3" strokeWidth="1.300" /></Icon></div>
    </aside>
  );
}

function StatusBar() {
  return (
    <div className="flex h-[24px] items-center border-t border-[#e1dfdd] bg-[#f3f2f1] pl-[4px] text-[12px] leading-[18px] text-[#484644]">
      <Fit className="mt-[3px] w-[59px]">Page 3 of 4</Fit>
      <Icon w={123} h={14} className="ml-[1091px]"><path d="M9 7.500h100M115 7.500h7M118.500 4v7M59.500 5v5" stroke="#605e5c" /><path d="M0 7.500h4" strokeWidth="1.300" /><rect x="40" y="2" width="4" height="11" fill="#605e5c" stroke="none" /></Icon>
      <Fit className="ml-[13px] w-[23px] text-[#605e5c]">68%</Fit>
      <Icon w={16} h={12} className="ml-[19px]"><rect x=".5" y=".5" width="15" height="11" stroke="#605e5c" /><path d="M3 5V3h2.500M13 5V3h-2.500M3 7.500v2h2.500M13 7.500v2h-2.500" stroke="#8b3a96" /></Icon>
    </div>
  );
}

/* ---------- taskbar ---------- */
const apps = [
  <g key="a" stroke="none"><path d="M1 1h11v11H1z" fill="#37b6f0" /><path d="M13 1h11v11H13z" fill="#22a0e8" /><path d="M1 13h11v11H1z" fill="#138bdc" /><path d="M13 13h11v11H13z" fill="#0a78d4" /></g>,
  <g key="b" stroke="#2b2a29"><circle cx="11.500" cy="11" r="9" strokeWidth="2.200" fill="#e6eef2" /><path d="M18 18l4.500 4.500" strokeWidth="2.800" strokeLinecap="round" /></g>,
  <g key="c" stroke="none"><path d="M0 7h18v16H0z" fill="#2d2d2c" /><path d="M6 1h18v16H6z" fill="#fff" opacity=".85" /><path d="M6 7h12v10H6z" fill="#a8a8a6" /></g>,
  <g key="d" stroke="none"><path d="M12.500 1a11.500 11.500 0 1 1 0 23H1.500v-11A11.500 11.500 0 0 1 12.500 1z" fill="#6061cb" /><path d="M12.500 1A11.500 11.500 0 0 0 1.500 12l21-5c-2-4-6-6-10-6z" fill="#8a78c4" opacity=".5" /><rect x="6" y="8" width="9.500" height="9" rx="1.500" fill="#fff" /><path d="M16.500 11l3-2.500v8l-3-2.500z" fill="#fff" /></g>,
  null,
  <ellipse key="f" cx="12.500" cy="12.500" rx="8.500" ry="9.300" stroke="#e5162c" strokeWidth="5" />,
  <g key="g" stroke="none"><path d="M7 2h17v7H7z" fill="#41a5ee" /><path d="M7 8h17v6H7z" fill="#2b7cd3" /><path d="M7 13h17v10H7z" fill="#185abd" /><rect x="0" y="6" width="14" height="14" rx="1" fill="#103f91" /><path d="M2.500 9.500l2 7 2.500-6.500 2.500 6.500 2-7" stroke="#fff" strokeWidth="1.500" fill="none" /></g>,
  <g key="h" stroke="none"><path d="M1 2h8l3 3h12v4H1z" fill="#dca11c" /><rect x="1" y="5.500" width="23.500" height="17.500" rx="1.500" fill="#fdd053" /><path d="M5.500 23v-5c0-1.500 1-2 2-2h10.500c1.500 0 2 1 2 2v5z" fill="#1c78c8" /><path d="M9 19.500h8" stroke="#0c4f92" strokeWidth="1.500" /></g>,
  <g key="i" stroke="none"><path d="M13 3h11v19H13z" fill="#fff" stroke="#1d7044" /><path d="M15 6.500h3M20 6.500h3M15 10.500h3M20 10.500h3M15 14.500h3M20 14.500h3M15 18.500h3M20 18.500h3" stroke="#1d7044" strokeWidth="2" /><path d="M2 3.500L15 1v23L2 21.500z" fill="#1d7044" /><path d="M5.500 8l5.500 9M11 8l-5.500 9" stroke="#fff" strokeWidth="2" /></g>,
  <g key="j" stroke="none"><path d="M0 10l12.500-9L24.500 10v3H0z" fill="#0f62b0" /><path d="M3 9h19v7H3z" fill="#fff" /><path d="M0 10l12.500 6 12-6v13H0z" fill="#2ba9e8" /><path d="M24.500 10v13H2z" fill="#55c8f5" /></g>,
  <g key="k" stroke="none"><path d="M.5.500h24v24H.5z" fill="#5a3df5" /><path d="M.5 16L16 .5h8.500v9L9 24.500H.5z" fill="#365cff" /><path d="M4 18l5-11M9.500 18l5-11M15 17.500L20.500 7v11M15.500 15h5" stroke="#fff" strokeWidth="2" /></g>,
  <g key="l" stroke="none"><circle cx="12.500" cy="12.500" r="12" fill="#1573c8" /><path d="M.7 12C1 5 6 .5 12.500.5c8 0 12 6 12 10 0 5-5 6-9 4.500 1-1 1-5-4-6C7 8.500 2.500 9 .7 12z" fill="#36c2b8" /><path d="M18 2c5 2.500 7 7 6.300 10-1 4-5 4-8.500 3 1-1 1-3 0-4z" fill="#6bd65a" /><path d="M8.500 12c-2 6 3 12 8 11.500 3-.5 5.500-3 6.500-5-5 2-11.500 0-11.500-6z" fill="#0b4fa0" /><path d="M12 13c.5 5 6 6.500 11.500 5 1-2-3-1-7.500-3 1-1 1-4-1.500-4.500z" fill="#d7e9f4" /></g>,
  <g key="m" stroke="none"><circle cx="12.500" cy="12.500" r="12" fill="#fdc81c" /><path d="M2 6.500A12 12 0 0 1 23 6.500H12.500l-5 9z" fill="#e33b2e" /><path d="M2 6.500a12 12 0 0 0 10.500 18l5-9.500h-10z" fill="#2a9c4a" /><circle cx="12.500" cy="12.500" r="6" fill="#fff" /><circle cx="12.500" cy="12.500" r="4.800" fill="#3479ea" /></g>,
  <g key="n" stroke="none"><path d="M3 4c0-3 12-3 12 0v9c0 3-12 3-12 0z" fill="#f9c51c" /><ellipse cx="9" cy="4" rx="6" ry="2.200" fill="#e79527" /><path d="M18 2.500h4.500V7M2 17v5.500h5" fill="none" stroke="#4a9b4c" strokeWidth="2" /><path d="M12 14l9 8.500M20.500 13.500L12 22.500" fill="none" stroke="#9b5bc5" strokeWidth="1.800" /><path d="M10.500 15l3-3M18 12l4.500 4" fill="none" stroke="#9b5bc5" strokeWidth="1.800" /></g>,
  <g key="o" stroke="none"><path d="M.5.5h24v24H.5z" fill="#00b4c5" /><path d="M12 .5h9.500v24H12z" fill="#d69b14" /><path d="M7 6.500h9v18H7z" fill="#eec23c" /><path d="M2.500 12.500h9v12h-9z" fill="#ffe178" /></g>,
];

function Taskbar() {
  return (
    <footer className="flex h-[48px] items-center border-t border-[#a9b6bd] bg-[#d5e7f0] text-[#1c1b1a]">
      <div className="w-[288px] pl-[19px]">
        <Icon w={34} h={32} className="-mt-[3px]"><path d="M2 14h9a3 3 0 0 0 0-6A5 5 0 0 0 4 9c-4 0-4 5-2 5z" fill="#92b5f0" stroke="#6e96de" /><path d="M3 20c5 .5 10-1 12-7l7 2c2 5-2 11-10 10-4-.5-7-2-9-5z" fill="#f1961d" stroke="none" /><path d="M14 26h9a2.800 2.800 0 0 0 0-5.500c-1-4.500-6.500-4.500-7.500-1-4 0-4.500 5.500-1.500 6.500z" fill="#8fb3f0" stroke="#6e96de" /><rect x="9" y="0" width="23" height="16" rx="8" fill="#f5fafc" stroke="none" /><text x="12.500" y="12" fontSize="11" fontFamily="Open Sans" fill="#1c1b1a" stroke="none" textLength="16" lengthAdjust="spacingAndGlyphs">76°</text></Icon>
      </div>
      <div className="flex">
        {apps.map((a, i) => (
          <div key={i} className="flex h-[47px] w-[44px] items-center justify-center">
            <div className={"flex h-[38px] w-[38px] flex-col items-center rounded-[4px] pt-[7px] " + (i === 14 ? "bg-[#eaf3f8]" : "")}>
              {a ? <Icon w={25} h={25}>{a}</Icon> : <CopilotLogo s={25} />}
              {[7, 11, 12, 13].includes(i) && <div className="mt-[3px] h-[3px] w-[6px] shrink-0 rounded-full bg-[#84898c]" />}
              {i === 14 && <div className="mt-[3px] h-[3px] w-[16px] shrink-0 rounded-full bg-[#00b4c5]" />}
            </div>
          </div>
        ))}
      </div>
      <Icon w={12} h={8} className="ml-[69px]"><path d="M1 6.500l5-5 5 5" strokeWidth="1.400" /></Icon>
      <Icon w={17} h={13} className="ml-[17px]"><path d="M4 11.500h9.500a3 3 0 0 0 .5-6C13 1 6 0 4.500 5 0 5 0 11 4 11.500z" fill="#d6d6d6" strokeWidth="1.200" /><path d="M4 5.500C7 0 13 1 14 5.500L9 8z" fill="#8a8a8a" stroke="none" /></Icon>
      <Icon w={17} h={17} className="ml-[16px]"><path d="M7.500.5L14.500 3v6c0 3-3 5.500-7 7-4-1.500-7-4-7-7V3z" fill="#1689d8" stroke="none" /><path d="M7.500.5v15.500c-4-1.500-7-4-7-7V3z" fill="#39b4ef" stroke="none" /><path d="M11 6l5.500 10H5.500z" fill="#ffc727" stroke="none" /><path d="M11 9.500v3.500M11 14v1.200" stroke="#111" strokeWidth="1.300" /></Icon>
      <Icon w={12} h={17} className="ml-[17px]"><rect width="12" height="16" y=".5" rx="5" fill="#0a84f5" stroke="none" /><path d="M3 5.500l6 5.500-3 3V3l3 3-6 5.500" stroke="#fff" strokeWidth="1.200" /></Icon>
      <Fit className="ml-[20px] w-[24px] text-[11px] leading-[16px]">ENG</Fit>
      <Icon w={17} h={14} className="ml-[18px]"><path d="M1 5.500c4-4.500 11-4.500 15 0M3.500 8c3-3 7-3 10 0M6 10.300c1.500-1.500 3.500-1.500 5 0" stroke="#1c1b1a" strokeWidth="1.100" /><circle cx="8.500" cy="12" r="1.200" fill="#1c1b1a" stroke="none" /></Icon>
      <Icon w={17} h={14} className="ml-[7px]"><path d="M1 5v4h2.500L7 12V2L3.500 5zM9.500 4.500c1.500 1.500 1.500 3.500 0 5M11.800 3c2.300 2.300 2.300 5.700 0 8M14 1.500c3 3 3 8 0 11" stroke="#1c1b1a" /></Icon>
      <Icon w={17} h={12} className="ml-[7px]"><rect x=".6" y="1.200" width="14" height="9" rx="2.200" stroke="#1c1b1a" strokeWidth="1.200" /><rect x="2" y="2.700" width="10.500" height="6" rx="1" fill="#1c1b1a" stroke="none" /><path d="M15.800 4v3.500" stroke="#1c1b1a" strokeWidth="1.500" /></Icon>
      <div className="ml-[16px] flex w-[55px] flex-col items-end text-[11px] leading-[16px]"><Fit className="w-[44px]">4:05 AM</Fit><Fit className="w-[55px]">11/5/2024</Fit></div>
      <Icon w={15} h={17} className="ml-[9px]"><path d="M.5 12.500c2-2 1-5 1.500-7.500C3 1 10 1 11.500 4c.5 3-.5 6 1.500 8.500zM4.500 14h4.500c-.5 2-4 2-4.500 0z" fill="#1c1b1a" stroke="none" /><path d="M5 6h3l-3 4h3" stroke="#fff" /><path d="M10.500 1h3l-3 3.500h3" stroke="#1c1b1a" /></Icon>
    </footer>
  );
}

export default function App() {
  return (
    <div className="h-[768px] w-[1366px] overflow-hidden bg-white font-['Open_Sans',sans-serif]">
      <TitleBar />
      <RibbonTabs />
      <Ribbon />
      <main className="flex h-[535px]">
        <LeftNav />
        <div className="w-[1111px] shrink-0">
          <div className="flex"><Canvas /><FiltersPane /></div>
          <PageTabs />
        </div>
        <DataPane />
        <RightRail />
      </main>
      <StatusBar />
      <div className="h-px bg-black" />
      <Taskbar />
    </div>
  );
}
